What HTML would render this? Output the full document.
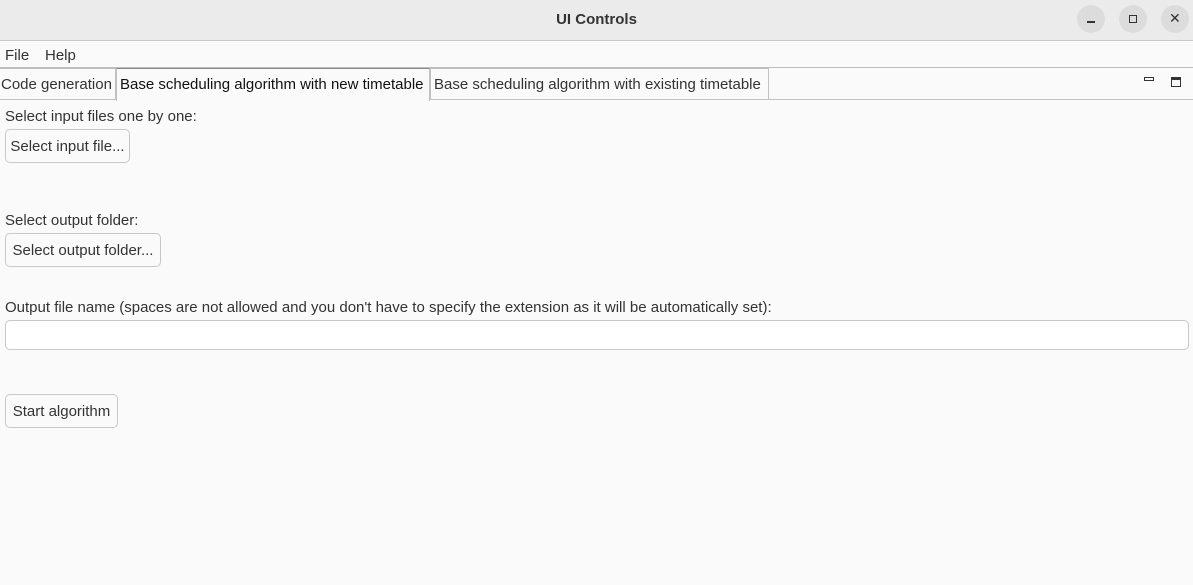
<!DOCTYPE html>
<html><head><style>
*{margin:0;padding:0;box-sizing:border-box}
body{width:1193px;height:585px;background:#fafafa;font-family:"Liberation Sans","DejaVu Sans",sans-serif;font-size:15px;color:#333;position:relative;overflow:hidden}
.abs{position:absolute;white-space:nowrap}
#title{left:0;top:0;width:1193px;height:41px;background:#ebebeb;border-bottom:1px solid #c8c8c8}
#title .t{left:0;width:1193px;top:11px;text-align:center;font-weight:bold;font-size:15px;color:#333}
.cb{width:28px;height:28px;border-radius:50%;background:#dcdcdc;top:5px}
#menu{top:42px;left:0;width:1193px;height:26px;border-bottom:1px solid #bdbdbd}
.tab{top:68px;height:32px;border:1px solid #c0c0c0;border-bottom:none;padding:7px 0 0 3px;color:#333}
.btn{border:1px solid #c8c8c8;border-radius:5px;background:#fafafa;height:34px;padding:8px 0 0 0;text-align:center;color:#333}
</style></head><body>
<div id="title" class="abs"><div class="abs t">UI Controls</div>
<div class="abs cb" style="left:1077px"></div><div class="abs" style="left:1087px;top:21px;width:8px;height:1.5px;background:#333"></div>
<div class="abs cb" style="left:1119px"></div><div class="abs" style="left:1129px;top:15px;width:8px;height:8px;border:1.3px solid #333"></div>
<div class="abs cb" style="left:1161px"></div><div class="abs" style="left:1169px;top:10px;font-size:14px;color:#333">✕</div>
</div>
<div id="menu" class="abs"><span class="abs" style="left:5px;top:5px">File</span><span class="abs" style="left:45px;top:5px">Help</span></div>
<div class="abs" style="top:99px;left:0;width:1193px;height:1px;background:#c0c0c0"></div>
<div class="abs tab" style="left:0;width:116px;border-left:none;padding-left:1px">Code generation</div>
<div class="abs tab" style="left:116px;width:314px;background:#fafafa;height:33px;border-top:1px solid #888;color:#111">Base scheduling algorithm with new timetable</div>
<div class="abs tab" style="left:430px;width:339px">Base scheduling algorithm with existing timetable</div>
<div class="abs" style="left:1144px;top:77px;width:10px;height:4px;border:1.3px solid #333"></div>
<div class="abs" style="left:1171px;top:77px;width:10px;height:10px;border:1.3px solid #333;border-top-width:3px"></div>
<div class="abs" style="left:5px;top:108px">Select input files one by one:</div>
<div class="abs btn" style="left:5px;top:129px;width:125px">Select input file...</div>
<div class="abs" style="left:5px;top:212px">Select output folder:</div>
<div class="abs btn" style="left:5px;top:233px;width:156px">Select output folder...</div>
<div class="abs" style="left:5px;top:299px">Output file name (spaces are not allowed and you don't have to specify the extension as it will be automatically set):</div>
<div class="abs" style="left:5px;top:320px;width:1184px;height:30px;border:1px solid #c8c8c8;border-radius:5px;background:#fff"></div>
<div class="abs btn" style="left:5px;top:394px;width:113px">Start algorithm</div>
</body></html>
